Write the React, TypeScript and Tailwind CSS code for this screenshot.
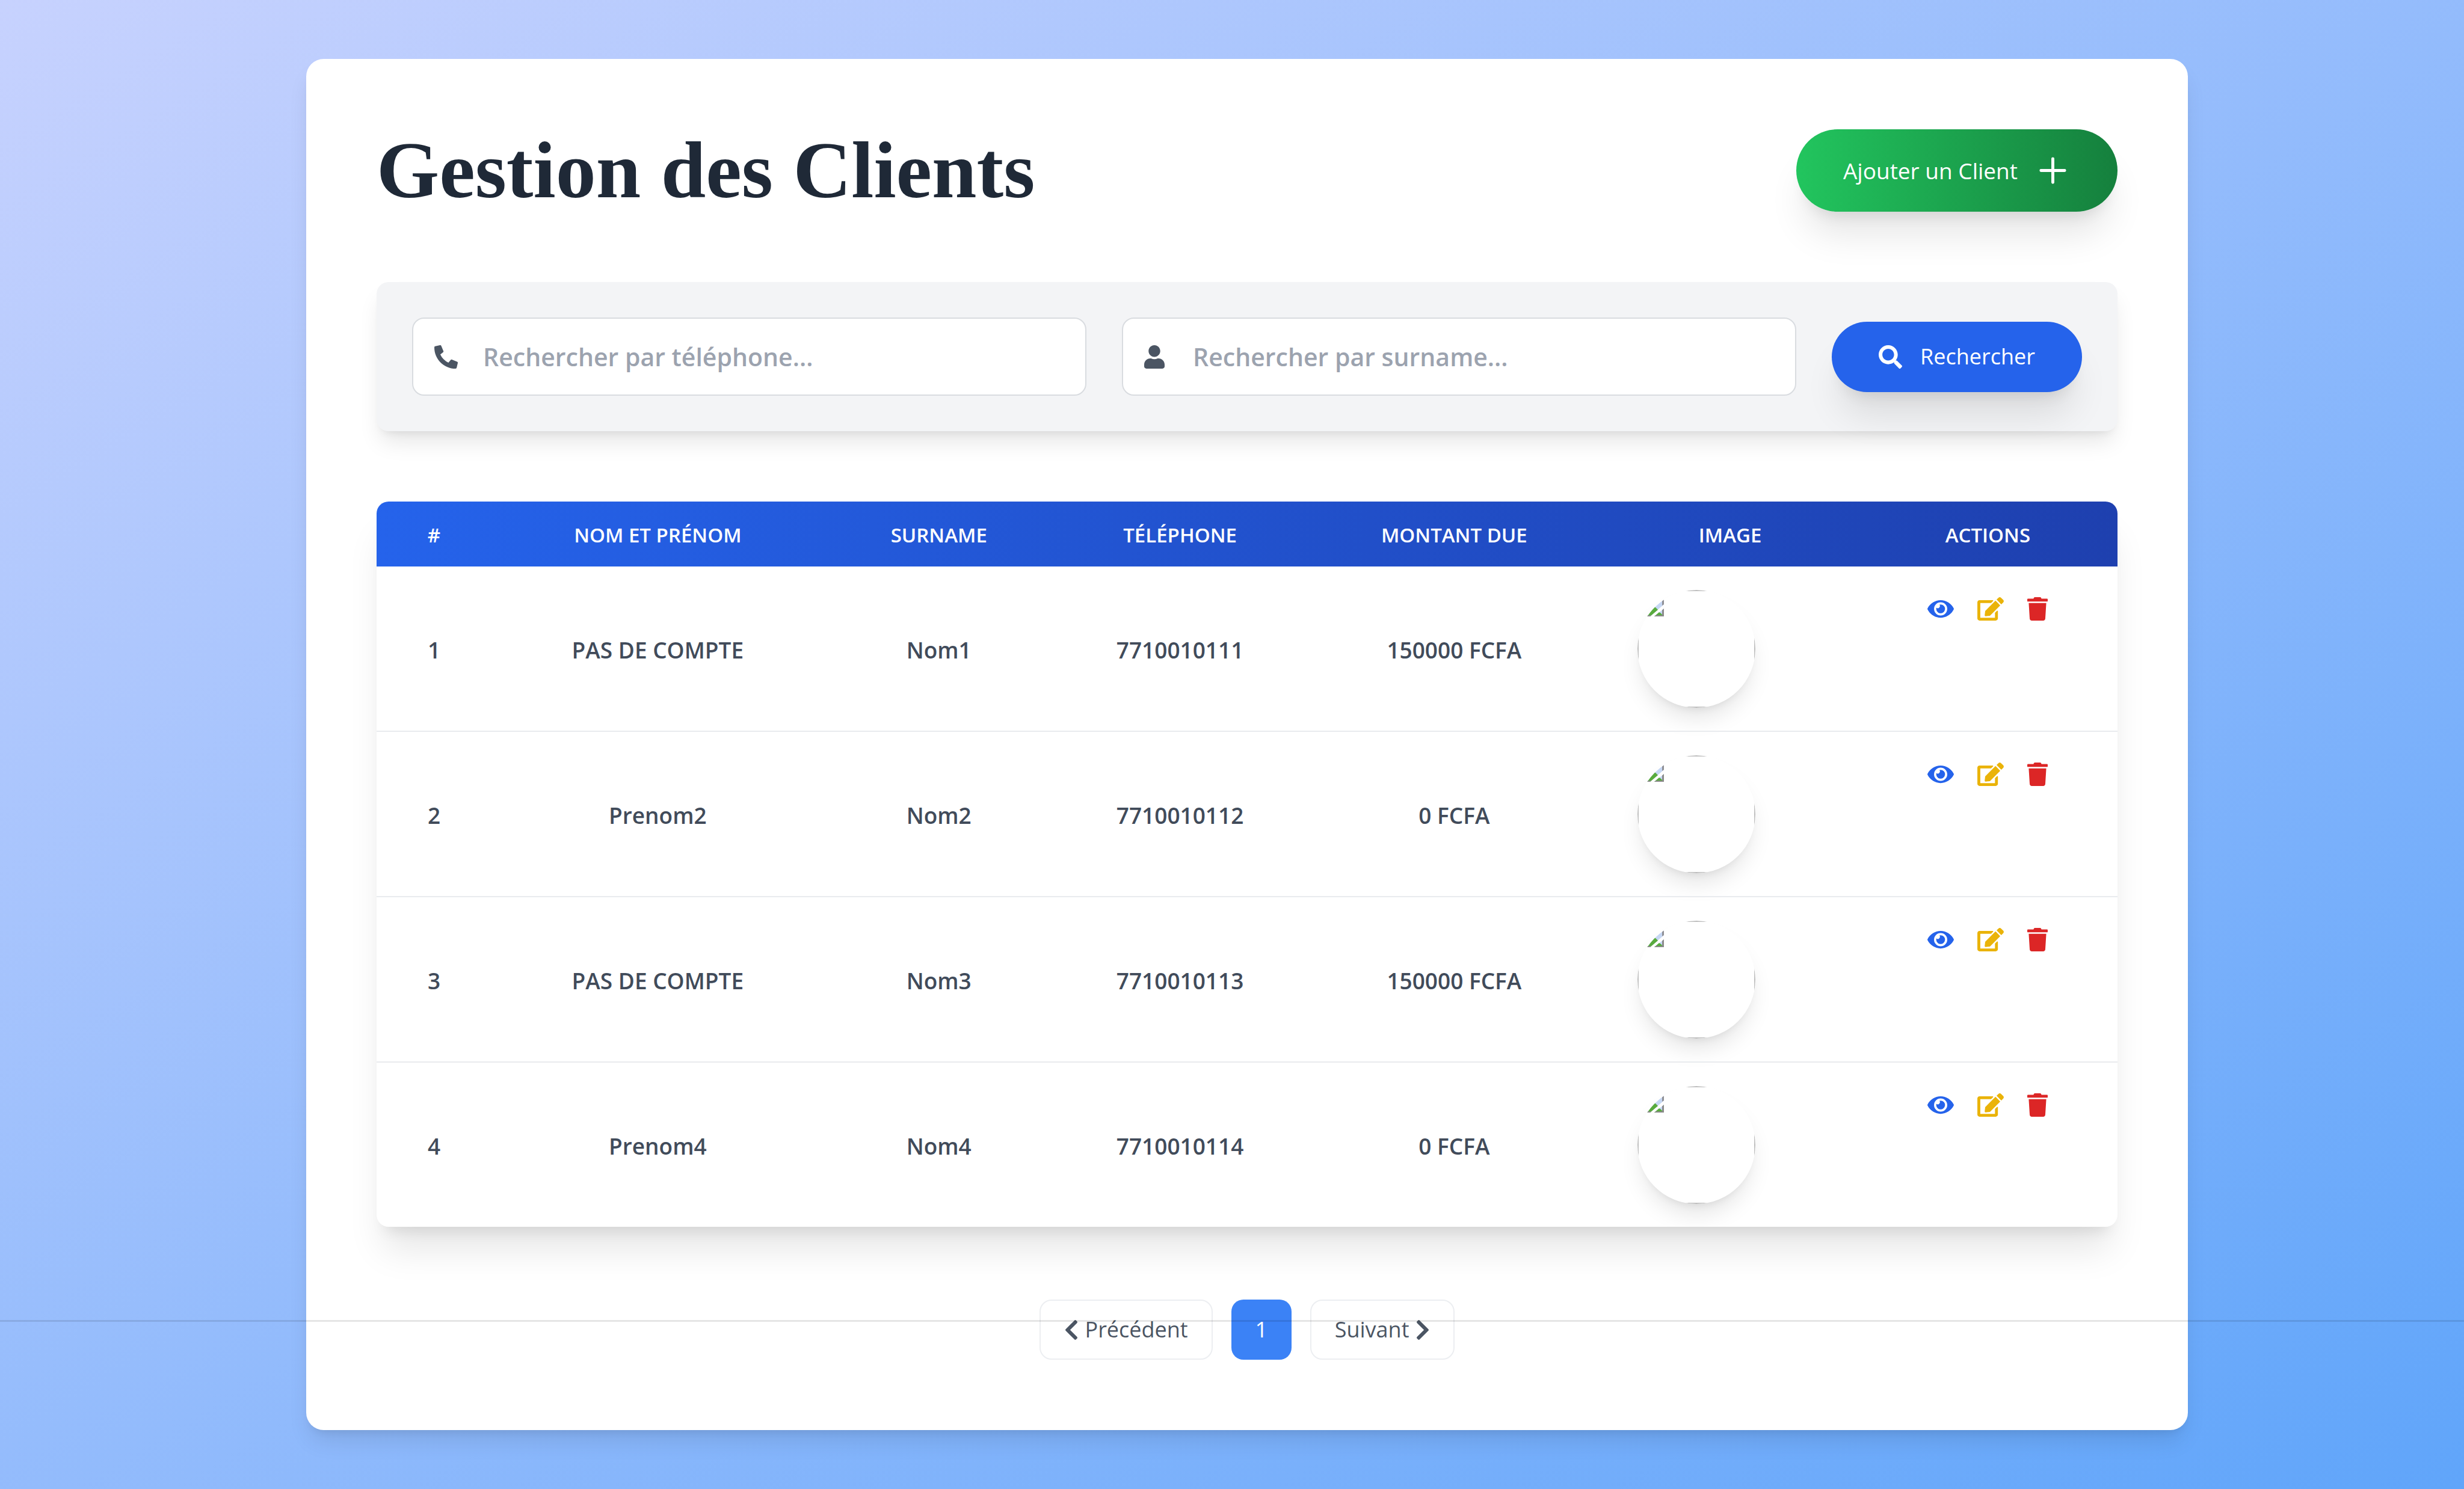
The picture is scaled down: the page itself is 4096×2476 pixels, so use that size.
import type { ReactNode } from "react";
import {
  FaChevronLeft,
  FaChevronRight,
  FaEdit,
  FaEye,
  FaPhoneAlt,
  FaSearch,
  FaTrash,
  FaUser,
} from "react-icons/fa";

type Client = {
  id: number;
  name: string;
  surname: string;
  phone: string;
  due: string;
};

const clients: Client[] = [
  { id: 1, name: "PAS DE COMPTE", surname: "Nom1", phone: "7710010111", due: "150000 FCFA" },
  { id: 2, name: "Prenom2", surname: "Nom2", phone: "7710010112", due: "0 FCFA" },
  { id: 3, name: "PAS DE COMPTE", surname: "Nom3", phone: "7710010113", due: "150000 FCFA" },
  { id: 4, name: "Prenom4", surname: "Nom4", phone: "7710010114", due: "0 FCFA" },
];

function PlusIcon() {
  return (
    <svg viewBox="0 0 24 24" className="size-[59px]" fill="none" stroke="currentColor" strokeWidth="2" strokeLinecap="round" aria-hidden="true">
      <path d="M12 4v16M4 12h16" />
    </svg>
  );
}

/* Round avatar whose picture is missing: the square frame only shows where the circle touches it. */
function MissingAvatar({ id }: { id: number }) {
  const clip = `avatar-${id}`;
  return (
    <svg
      viewBox="0 0 196 196"
      role="img"
      aria-label="Photo du client"
      className="block size-[196px] rounded-full shadow-[0_24px_37px_-7px_rgb(0_0_0/0.1),0_10px_15px_-10px_rgb(0_0_0/0.1)]"
    >
      <defs>
        <clipPath id={clip}>
          <circle cx="98" cy="98" r="98" />
        </clipPath>
      </defs>
      <g clipPath={`url(#${clip})`}>
        <rect x="1" y="1" width="194" height="194" fill="none" stroke="#bdbdbd" strokeWidth="2" />
        <path d="M5 5H44V24L21 44H5Z" fill="#c6d7f4" />
        <path d="M5 44V34Q20 25 30 29L34 33L21 44Z" fill="#58ab3d" />
        <path d="M5 42H23L21 44H5Z" fill="#8a8a8a" />
        <path d="M41 5H44V24L41 26Z" fill="#8f8f94" />
        <path d="M28 44L44 31V44Z" fill="#c6d7f4" />
        <path d="M28 44L36 37Q41 39 42 44Z" fill="#58ab3d" />
        <path d="M28 44L31 42H41V33.5L44 31V44Z" fill="#8a8a8a" />
      </g>
    </svg>
  );
}

function SearchField({ id, placeholder, children }: { id: string; placeholder: string; children: ReactNode }) {
  return (
    <div className="relative flex-1">
      <label htmlFor={id} className="absolute inset-y-0 left-[37px] flex items-center text-[#4b5563]">
        {children}
      </label>
      <input
        id={id}
        type="text"
        placeholder={placeholder}
        className="block h-[130px] w-full rounded-[20px] border-2 border-[#d9dce0] bg-white pl-[116px] pr-[39px] text-[41px] leading-[60px] font-semibold text-[#374151] placeholder:text-[#9ca3af]"
      />
    </div>
  );
}

const cell = "px-[10px] pt-[4px] text-center align-middle";

export default function App() {
  return (
    <div className="relative min-h-screen bg-[linear-gradient(to_bottom_right,#c7d2fe,#60a5fa)] pt-[98px] pb-[97px] pl-[50px] font-['Open_Sans',sans-serif]">
      <main className="mx-auto w-full max-w-[3128px] rounded-[29px] bg-white p-[117px] shadow-[0_24px_37px_-7px_rgb(0_0_0/0.1),0_10px_15px_-10px_rgb(0_0_0/0.1)]">
        <header className="mb-[117px] flex items-center justify-between">
          <h1 className="font-['Liberation_Serif',serif] text-[134px] leading-[137px] font-bold text-[#1f2937]">
            Gestion des Clients
          </h1>
          <button
            type="button"
            className="flex h-[137px] items-center gap-[29px] rounded-full bg-[linear-gradient(to_right,#22c55e,#15803d)] px-[78px] text-[37px] text-white shadow-[0_49px_61px_-12px_rgb(0_0_0/0.1),0_20px_24px_-15px_rgb(0_0_0/0.1)]"
          >
            Ajouter un Client
            <PlusIcon />
          </button>
        </header>

        <form className="mb-[117px] flex items-center gap-[59px] rounded-[20px] bg-[#f3f4f6] p-[59px] shadow-[0_24px_37px_-7px_rgb(0_0_0/0.1),0_10px_15px_-10px_rgb(0_0_0/0.1)]">
          <SearchField id="search-phone" placeholder="Rechercher par téléphone...">
            <FaPhoneAlt title="Téléphone" className="size-[39px]" />
          </SearchField>
          <SearchField id="search-surname" placeholder="Rechercher par surname...">
            <FaUser title="Surname" className="h-[39px] w-[34px]" />
          </SearchField>
          <button
            type="button"
            className="flex h-[117px] items-center gap-[30px] rounded-full bg-[#2563eb] px-[78px] text-[36px] text-white shadow-[0_49px_61px_-12px_rgb(0_0_0/0.1),0_20px_24px_-15px_rgb(0_0_0/0.1)]"
          >
            <FaSearch className="size-[39px]" />
            Rechercher
          </button>
        </form>

        <div className="mb-[121px] overflow-hidden rounded-[20px] bg-white shadow-[0_49px_61px_-12px_rgb(0_0_0/0.1),0_20px_24px_-15px_rgb(0_0_0/0.1)]">
          <table className="w-full table-fixed border-collapse">
            <colgroup>
              <col className="w-[6.6%]" />
              <col className="w-[19.1%]" />
              <col className="w-[13.2%]" />
              <col className="w-[14.5%]" />
              <col className="w-[17%]" />
              <col className="w-[14.7%]" />
              <col className="w-[14.9%]" />
            </colgroup>
            <thead className="bg-[linear-gradient(to_right,#2563eb,#1e40af)] text-[33px] text-white uppercase">
              <tr className="h-[108px]">
                <th scope="col" className="pt-[4px] font-semibold">#</th>
                <th scope="col" className="pt-[4px] font-semibold">Nom et Prénom</th>
                <th scope="col" className="pt-[4px] font-semibold">Surname</th>
                <th scope="col" className="pt-[4px] font-semibold">Téléphone</th>
                <th scope="col" className="pt-[4px] font-semibold">Montant Due</th>
                <th scope="col" className="pt-[4px] font-semibold">Image</th>
                <th scope="col" className="pt-[4px] font-semibold">Actions</th>
              </tr>
            </thead>
            <tbody className="text-[37px] font-semibold text-[#414b5a]">
              {clients.map((c) => (
                <tr key={c.id} className="border-b-2 border-[#e9ebee] last:border-b-0">
                  <td className={cell}>{c.id}</td>
                  <td className={cell}>{c.name}</td>
                  <td className={cell}>{c.surname}</td>
                  <td className={cell}>{c.phone}</td>
                  <td className={cell}>{c.due}</td>
                  <td className="px-[59px] pt-[39px] pb-[38px]">
                    <MissingAvatar id={c.id} />
                  </td>
                  <td className="pt-[51px] align-top">
                    <div className="flex justify-center gap-[39px]">
                      <button type="button" aria-label="Voir" className="text-[#2563eb]">
                        <FaEye className="h-[39px] w-[44px]" />
                      </button>
                      <button type="button" aria-label="Modifier" className="text-[#eab308]">
                        <FaEdit className="h-[39px] w-[44px]" />
                      </button>
                      <button type="button" aria-label="Supprimer" className="text-[#dc2626]">
                        <FaTrash className="h-[39px] w-[34px]" />
                      </button>
                    </div>
                  </td>
                </tr>
              ))}
            </tbody>
          </table>
        </div>

        <nav aria-label="Pagination" className="flex justify-center gap-[31px] text-[36px] text-[#4b5563]">
          <button type="button" className="flex h-[100px] items-center gap-[10px] rounded-[20px] border-2 border-[#eceef1] px-[39px]">
            <FaChevronLeft className="h-[39px] w-[24px]" />
            Précédent
          </button>
          <button type="button" aria-current="page" className="size-[100px] rounded-[20px] bg-[#3b82f6] text-white">
            1
          </button>
          <button type="button" className="flex h-[100px] items-center gap-[10px] rounded-[20px] border-2 border-[#eceef1] px-[39px]">
            Suivant
            <FaChevronRight className="h-[39px] w-[24px]" />
          </button>
        </nav>
      </main>
      <div className="pointer-events-none absolute inset-x-0 bottom-[278px] h-[3px] bg-black/10" />
    </div>
  );
}
